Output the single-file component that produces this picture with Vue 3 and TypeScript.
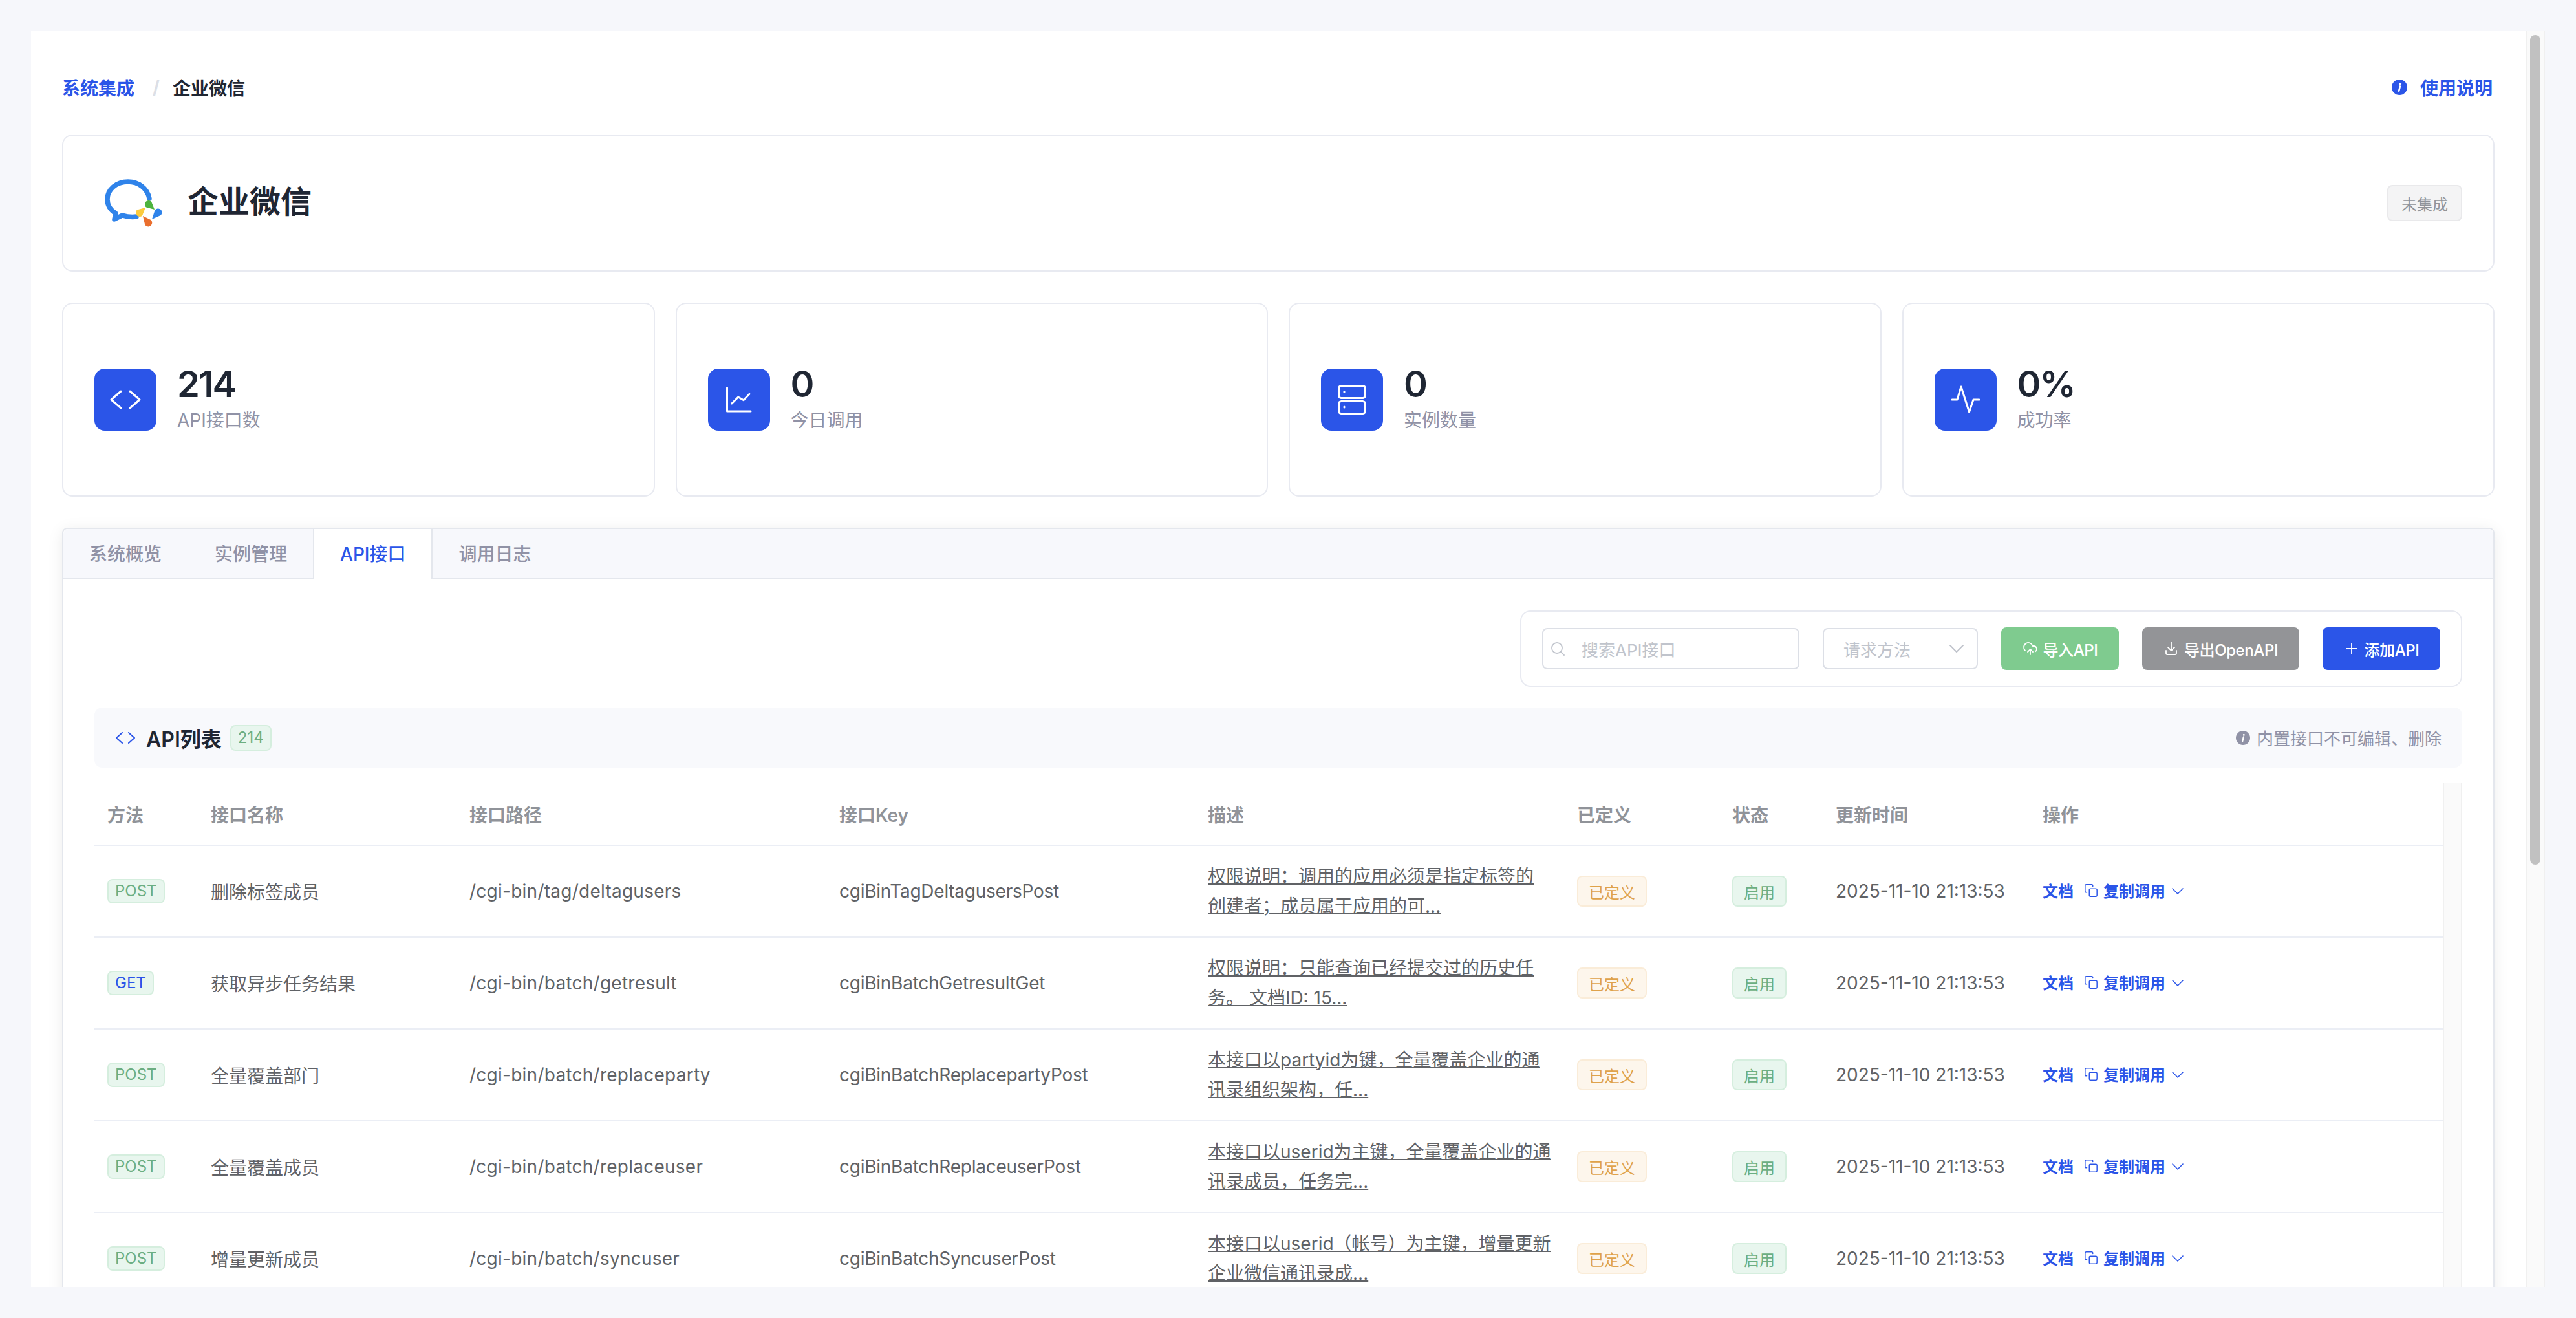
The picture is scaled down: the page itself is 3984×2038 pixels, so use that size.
<script setup lang="ts">
import { ref } from 'vue';

interface ApiRow {
  method: 'GET' | 'POST';
  name: string;
  path: string;
  key: string;
  desc: string;
}

const tabs = ['系统概览', '实例管理', 'API接口', '调用日志'];
const activeTab = ref('API接口');

const stats = [
  { icon: 'code', value: '214', label: 'API接口数' },
  { icon: 'chart', value: '0', label: '今日调用' },
  { icon: 'server', value: '0', label: '实例数量' },
  { icon: 'pulse', value: '0%', label: '成功率' },
];

const columns = [
  { label: '方法', width: 160 },
  { label: '接口名称', width: 400 },
  { label: '接口路径', width: 572 },
  { label: '接口Key', width: 570 },
  { label: '描述', width: 571 },
  { label: '已定义', width: 240 },
  { label: '状态', width: 160 },
  { label: '更新时间', width: 320 },
  { label: '操作', width: 639 },
];

const rows: ApiRow[] = [
  {
    method: 'POST',
    name: '删除标签成员',
    path: '/cgi-bin/tag/deltagusers',
    key: 'cgiBinTagDeltagusersPost',
    desc: '权限说明：调用的应用必须是指定标签的创建者；成员属于应用的可...',
  },
  {
    method: 'GET',
    name: '获取异步任务结果',
    path: '/cgi-bin/batch/getresult',
    key: 'cgiBinBatchGetresultGet',
    desc: '权限说明：只能查询已经提交过的历史任务。 文档ID: 15...',
  },
  {
    method: 'POST',
    name: '全量覆盖部门',
    path: '/cgi-bin/batch/replaceparty',
    key: 'cgiBinBatchReplacepartyPost',
    desc: '本接口以partyid为键，全量覆盖企业的通讯录组织架构，任...',
  },
  {
    method: 'POST',
    name: '全量覆盖成员',
    path: '/cgi-bin/batch/replaceuser',
    key: 'cgiBinBatchReplaceuserPost',
    desc: '本接口以userid为主键，全量覆盖企业的通讯录成员，任务完...',
  },
  {
    method: 'POST',
    name: '增量更新成员',
    path: '/cgi-bin/batch/syncuser',
    key: 'cgiBinBatchSyncuserPost',
    desc: '本接口以userid（帐号）为主键，增量更新企业微信通讯录成...',
  },
];
</script>

<template>
  <div class="page">
    <div class="shell">
      <main class="content">
        <div class="crumbs">
          <div class="crumb-path">
            <a class="crumb-link">系统集成</a>
            <span class="crumb-sep">/</span>
            <span class="crumb-current">企业微信</span>
          </div>
          <a class="help-link">
            <svg class="info-icon" viewBox="0 0 24 24">
              <circle cx="12" cy="12" r="12" fill="currentColor" />
              <circle cx="13.4" cy="6.8" r="1.7" fill="#fff" />
              <path d="M13 10.4l-1.9 7.4" stroke="#fff" stroke-width="2.6" stroke-linecap="round" fill="none" />
            </svg>
            使用说明
          </a>
        </div>

        <section class="system-card">
          <div class="system-title">
            <svg class="logo" viewBox="0 0 112 112">
              <path
                d="M85 49C82 33 68 23 52 23C34 23 20 35 20 50C20 60 25 67 33 72L31 81L43 75C50 77 58 78 65 77"
                fill="none"
                stroke="#2f83ea"
                stroke-width="7.5"
                stroke-linecap="round"
                stroke-linejoin="round"
              />
              <path d="M93 66L80 62.5A6 6 0 1 1 88 53.5Z" fill="#4db33d" />
              <path d="M79 63L74 75.5A6 6 0 1 1 66 66.5Z" fill="#fbcb3e" />
              <path d="M75 76L87.7 82.3A6 6 0 1 1 78.3 89.7Z" fill="#ea6f2e" />
              <path d="M89 81L93.6 67A6 6 0 1 1 102.4 75Z" fill="#2f83ea" />
            </svg>
            <h1>企业微信</h1>
          </div>
          <span class="tag tag-gray">未集成</span>
        </section>

        <section class="stats">
          <div v-for="item in stats" :key="item.label" class="stat-card">
            <div class="stat-icon">
              <svg viewBox="0 0 96 96" fill="none" stroke="#fff" stroke-width="3" stroke-linecap="round" stroke-linejoin="round">
                <template v-if="item.icon === 'code'">
                  <polyline points="41,35 26,48 41,61" />
                  <polyline points="55,35 70,48 55,61" />
                </template>
                <template v-else-if="item.icon === 'chart'">
                  <polyline points="29.5,29.5 29.5,66 66,66" />
                  <polyline points="36.7,54 46.7,44 55,48.7 64,39.3" />
                </template>
                <template v-else-if="item.icon === 'server'">
                  <rect x="27.5" y="26.5" width="41" height="19" rx="4" />
                  <rect x="27.5" y="50.5" width="41" height="19" rx="4" />
                  <path d="M36 35.5v1M36 59v1" />
                </template>
                <polyline v-else points="27,48 35,48 41,28 53.5,67 60,48 69,48" />
              </svg>
            </div>
            <div class="stat-text">
              <div class="stat-value">{{ item.value }}</div>
              <div class="stat-label">{{ item.label }}</div>
            </div>
          </div>
        </section>

        <section class="tab-card">
          <div class="tab-bar">
            <div v-for="tab in tabs" :key="tab" class="tab" :class="{ active: tab === activeTab }">{{ tab }}</div>
          </div>

          <div class="tab-body">
            <div class="toolbar-row">
              <div class="toolbar">
                <div class="search">
                  <svg class="search-icon" viewBox="0 0 24 24" fill="none" stroke="#c0c4cc" stroke-width="1.8" stroke-linecap="round">
                    <circle cx="11" cy="11" r="8" />
                    <path d="M17 17l5 5" />
                  </svg>
                  <span class="placeholder">搜索API接口</span>
                </div>
                <div class="select">
                  <span class="placeholder">请求方法</span>
                  <svg class="select-arrow" viewBox="0 0 22 12" fill="none" stroke="#c0c4cc" stroke-width="2" stroke-linecap="round" stroke-linejoin="round">
                    <polyline points="1,1 11,11 21,1" />
                  </svg>
                </div>
                <button class="btn btn-green">
                  <svg viewBox="0 0 24 24" fill="none" stroke="#fff" stroke-width="1.8" stroke-linecap="round" stroke-linejoin="round">
                    <path d="M12 13v8M4 14.9A7 7 0 1 1 15.7 8h1.8a4.5 4.5 0 0 1 2.5 8.2M8 17l4-4 4 4" />
                  </svg>
                  导入API
                </button>
                <button class="btn btn-gray">
                  <svg viewBox="0 0 24 24" fill="none" stroke="#fff" stroke-width="1.8" stroke-linecap="round" stroke-linejoin="round">
                    <path d="M12 2v13M7 10l5 5 5-5M4 15v4a2 2 0 0 0 2 2h12a2 2 0 0 0 2-2v-4" />
                  </svg>
                  导出OpenAPI
                </button>
                <button class="btn btn-blue">
                  <svg viewBox="0 0 24 24" fill="none" stroke="#fff" stroke-width="1.8" stroke-linecap="round">
                    <path d="M12 4v16M4 12h16" />
                  </svg>
                  添加API
                </button>
              </div>
            </div>

            <div class="list-head">
              <div class="list-title">
                <svg class="list-icon" viewBox="0 0 32 18" fill="none" stroke="#2b55e8" stroke-width="2" stroke-linecap="round" stroke-linejoin="round">
                  <polyline points="11,1 2,9 11,17" />
                  <polyline points="21,1 30,9 21,17" />
                </svg>
                <h2>API列表</h2>
                <span class="count">214</span>
              </div>
              <div class="list-note">
                <svg viewBox="0 0 24 24">
                  <circle cx="12" cy="12" r="12" fill="currentColor" />
                  <circle cx="13.4" cy="6.8" r="1.7" fill="#fff" />
                  <path d="M13 10.4l-1.9 7.4" stroke="#fff" stroke-width="2.6" stroke-linecap="round" fill="none" />
                </svg>
                内置接口不可编辑、删除
              </div>
            </div>

            <div class="table-wrap">
              <table class="api-table">
                <colgroup>
                  <col v-for="col in columns" :key="col.label" :style="{ width: col.width + 'px' }" />
                </colgroup>
                <thead>
                  <tr>
                    <th v-for="col in columns" :key="col.label">{{ col.label }}</th>
                  </tr>
                </thead>
                <tbody>
                  <tr v-for="row in rows" :key="row.key">
                    <td>
                      <span class="method" :class="{ 'method-get': row.method === 'GET' }">{{ row.method }}</span>
                    </td>
                    <td>{{ row.name }}</td>
                    <td class="path-cell">{{ row.path }}</td>
                    <td class="key-cell">{{ row.key }}</td>
                    <td class="desc-cell"><a class="desc">{{ row.desc }}</a></td>
                    <td><span class="tag tag-orange">已定义</span></td>
                    <td><span class="tag tag-green">启用</span></td>
                    <td>2025-11-10 21:13:53</td>
                    <td>
                      <div class="actions">
                        <a>文档</a>
                        <a class="copy">
                          <svg viewBox="0 0 24 24" fill="none" stroke="#2b55e8" stroke-width="1.6" stroke-linecap="round" stroke-linejoin="round">
                            <rect x="9" y="9" width="13" height="13" rx="2" />
                            <path d="M5 15H4a2 2 0 0 1-2-2V4a2 2 0 0 1 2-2h9a2 2 0 0 1 2 2v1" />
                          </svg>
                          复制调用
                        </a>
                        <svg class="more" viewBox="0 0 18 10" fill="none" stroke="#2b55e8" stroke-width="1.6" stroke-linecap="round" stroke-linejoin="round">
                          <polyline points="1,1 9,9 17,1" />
                        </svg>
                      </div>
                    </td>
                  </tr>
                </tbody>
              </table>
              <div class="table-scroll"></div>
            </div>
          </div>
        </section>
      </main>

      <div class="scrollbar">
        <div class="thumb"></div>
      </div>
    </div>
  </div>
</template>

<style scoped>
.page {
  box-sizing: border-box;
  height: 100vh;
  padding: 48px;
  background: #f6f7fb;
  font-family: Inter, "Noto Sans CJK SC", sans-serif;
  font-size: 28px;
  color: #606266;
}

.shell {
  display: flex;
  height: 100%;
  background: #fff;
  overflow: hidden;
}

.content {
  flex: 1;
  min-width: 0;
  padding: 48px 48px 0;
  overflow: hidden;
}

.scrollbar {
  box-sizing: border-box;
  width: 30px;
  flex-shrink: 0;
  padding: 6px 5px;
  background: #fafafa;
  border-left: 2px solid #f0f0f0;
  border-right: 2px solid #f0f0f0;
}

.thumb {
  height: 1283px;
  border-radius: 8px;
  background: #c1c1c1;
}

.crumbs {
  display: flex;
  align-items: center;
  justify-content: space-between;
  height: 78px;
  margin-bottom: 34px;
  font-weight: 600;
}

.crumb-path {
  display: flex;
  align-items: center;
}

.crumb-link {
  color: #2b55e8;
}

.crumb-sep {
  margin: 0 20px 0 28px;
  color: #dcdfe6;
  font-weight: 700;
}

.crumb-current {
  color: #1f2633;
}

.help-link {
  display: flex;
  align-items: center;
  gap: 20px;
  padding-right: 3px;
  color: #2b55e8;
}

.info-icon {
  width: 24px;
  height: 24px;
}

.system-card {
  box-sizing: border-box;
  display: flex;
  align-items: center;
  justify-content: space-between;
  height: 212px;
  padding: 0 48px;
  border: 2px solid #e8eaf1;
  border-radius: 16px;
}

.system-title {
  display: flex;
  align-items: center;
  gap: 32px;
}

.logo {
  width: 112px;
  height: 112px;
}

.system-title h1 {
  margin: 0 0 12px;
  font-size: 48px;
  font-weight: 600;
  color: #1f2633;
}

.tag {
  box-sizing: border-box;
  display: inline-flex;
  align-items: center;
  height: 48px;
  padding: 0 16px;
  border: 2px solid;
  border-radius: 8px;
  font-size: 24px;
  vertical-align: top;
}

.tag-gray {
  height: 56px;
  padding: 0 20px;
  background: #f4f4f5;
  border-color: #e9e9eb;
  color: #909399;
}

.tag-orange {
  background: #fdf6ec;
  border-color: #faecd8;
  color: #dfa24a;
}

.tag-green {
  background: #e8f6ee;
  border-color: #d5eede;
  color: #6bae82;
}

.stats {
  display: grid;
  grid-template-columns: repeat(4, 1fr);
  gap: 32px;
  margin-top: 48px;
}

.stat-card {
  box-sizing: border-box;
  display: flex;
  align-items: center;
  gap: 32px;
  height: 300px;
  padding: 0 48px;
  border: 2px solid #e8eaf1;
  border-radius: 16px;
}

.stat-icon {
  width: 96px;
  height: 96px;
  border-radius: 16px;
  background: #2b55e8;
}

.stat-icon svg {
  display: block;
}

.stat-text {
  padding-bottom: 4px;
}

.stat-value {
  font-size: 56px;
  font-weight: 600;
  line-height: 64px;
  letter-spacing: -2px;
  color: #1f2633;
}

.stat-label {
  margin-top: 4px;
  line-height: 40px;
  color: #9092a6;
}

.tab-card {
  margin-top: 48px;
  border: 2px solid #e4e7ed;
  border-radius: 8px;
  box-shadow: 0 4px 24px rgba(0, 0, 0, 0.08);
}

.tab-bar {
  box-sizing: border-box;
  display: flex;
  height: 78px;
  background: #f7f8fc;
  border-bottom: 2px solid #e4e7ed;
  border-radius: 8px 8px 0 0;
}

.tab {
  box-sizing: border-box;
  height: 78px;
  margin-left: -2px;
  padding: 0 40px;
  border-left: 2px solid transparent;
  border-right: 2px solid transparent;
  line-height: 78px;
  color: #9092a6;
  font-weight: 500;
}

.tab:first-child {
  margin-left: 0;
  border-left: none;
}

.tab.active {
  background: #fff;
  border-color: #e4e7ed;
  color: #2b55e8;
}

.tab-body {
  padding: 48px 48px 0;
}

.toolbar-row {
  display: flex;
  justify-content: flex-end;
}

.toolbar {
  display: flex;
  align-items: center;
  gap: 36px;
  height: 118px;
  box-sizing: border-box;
  padding: 0 32px;
  border: 2px solid #e8eaf1;
  border-radius: 16px;
}

.search,
.select {
  box-sizing: border-box;
  display: flex;
  align-items: center;
  height: 64px;
  border: 2px solid #dcdfe6;
  border-radius: 8px;
  font-size: 26px;
}

.search {
  width: 398px;
  padding-left: 10px;
}

.search-icon {
  width: 24px;
  height: 24px;
  margin-right: 25px;
}

.select {
  width: 240px;
  padding: 0 20px 0 30px;
  justify-content: space-between;
}

.select-arrow {
  width: 22px;
  height: 12px;
}

.placeholder {
  color: #c0c4cc;
}

.btn {
  display: flex;
  align-items: center;
  justify-content: center;
  gap: 8px;
  width: 182px;
  height: 66px;
  padding: 0;
  border: none;
  border-radius: 8px;
  color: #fff;
  font-family: inherit;
  font-size: 24px;
  font-weight: 500;
  letter-spacing: -0.4px;
}

.btn svg {
  width: 24px;
  height: 24px;
}

.btn-green {
  background: #7fcb8f;
}

.btn-gray {
  width: 243px;
  background: #939497;
}

.btn-blue {
  background: #2b55e8;
}

.list-head {
  display: flex;
  align-items: center;
  justify-content: space-between;
  height: 93px;
  margin-top: 32px;
  padding: 0 32px;
  background: #f8f9fc;
  border-radius: 12px;
}

.list-title {
  display: flex;
  align-items: center;
}

.list-icon {
  width: 32px;
  height: 18px;
  margin-right: 16px;
}

.list-title h2 {
  margin: 0 13px 0 0;
  font-size: 32px;
  font-weight: 600;
  color: #1f2633;
}

.count {
  box-sizing: border-box;
  height: 40px;
  padding: 0 10px;
  border: 2px solid #d5eede;
  border-radius: 8px;
  background: #e8f6ee;
  color: #6bae82;
  font-size: 24px;
  line-height: 36px;
}

.list-note {
  display: flex;
  align-items: center;
  gap: 10px;
  font-size: 26px;
  color: #9092a6;
}

.list-note svg {
  width: 22px;
  height: 22px;
}

.table-wrap {
  display: flex;
  align-items: stretch;
  margin-top: 24px;
}

.api-table {
  width: 3632px;
  flex-shrink: 0;
  table-layout: fixed;
  border-collapse: separate;
  border-spacing: 0;
}

.api-table th,
.api-table td {
  box-sizing: border-box;
  padding: 0 20px;
  border-bottom: 2px solid #ebeef5;
  text-align: left;
}

.api-table th {
  height: 97px;
  color: #909399;
  font-weight: 600;
}

.api-table td {
  height: 142px;
}

.table-scroll {
  box-sizing: border-box;
  width: 30px;
  flex-shrink: 0;
  background: #fafafa;
  border-left: 2px solid #f0f0f0;
  border-right: 2px solid #f0f0f0;
}

.method {
  box-sizing: border-box;
  display: inline-block;
  height: 38px;
  padding: 0 10px;
  border: 2px solid #d5eede;
  border-radius: 8px;
  background: #e8f6ee;
  color: #6bae82;
  font-size: 24px;
  line-height: 34px;
  vertical-align: top;
}

.method-get {
  color: #2b55e8;
}

.path-cell {
  letter-spacing: 0.25px;
}

.key-cell {
  letter-spacing: -0.25px;
}

.desc-cell {
  line-height: 46px;
}

.desc {
  color: #606266;
  text-decoration: underline;
  text-decoration-thickness: 2px;
}

.actions {
  display: flex;
  align-items: center;
  font-size: 24px;
  font-weight: 600;
  color: #2b55e8;
}

.actions a {
  padding-bottom: 3px;
}

.copy {
  display: flex;
  align-items: center;
  gap: 8px;
  margin-left: 16px;
}

.copy svg {
  width: 22px;
  height: 22px;
}

.more {
  width: 18px;
  height: 10px;
  margin-left: 10px;
}
</style>

<style>
body {
  overflow: hidden;
}
</style>
